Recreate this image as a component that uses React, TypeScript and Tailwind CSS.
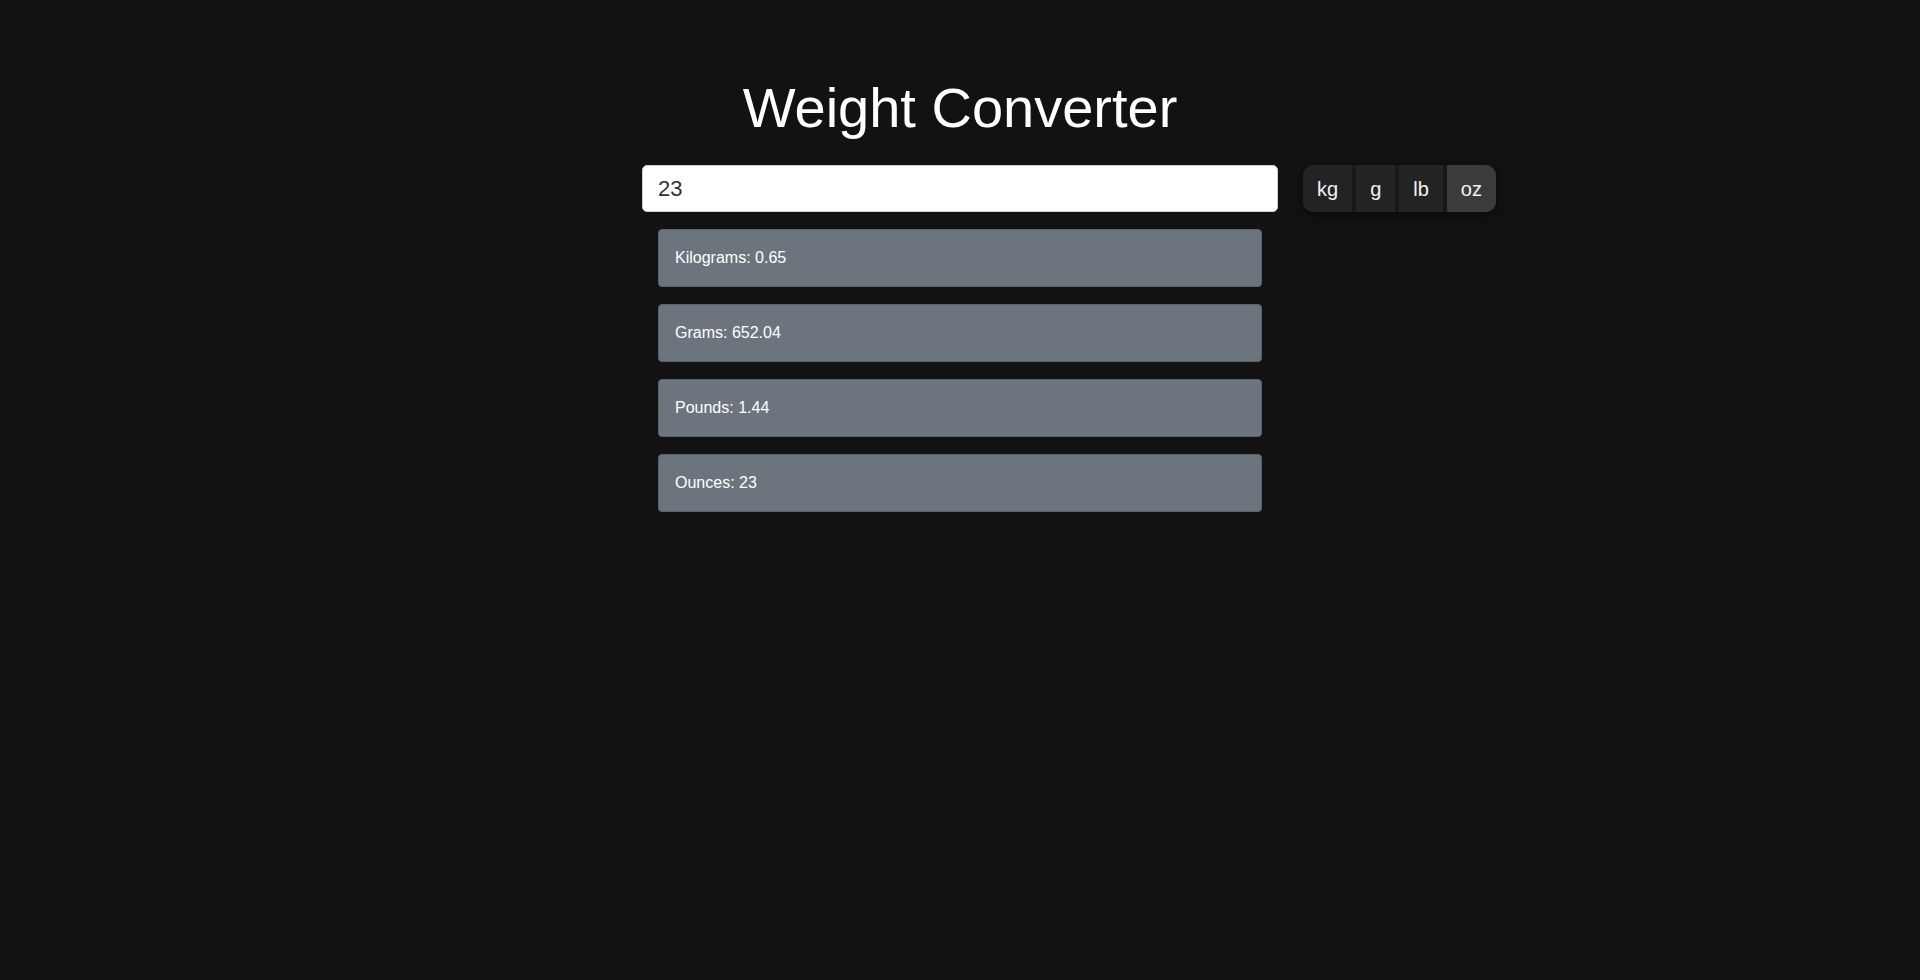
import { useState } from "react";

type Unit = "kg" | "g" | "lb" | "oz";

const toKg: Record<Unit, number> = {
  kg: 1,
  g: 0.001,
  lb: 0.45359237,
  oz: 0.028349523125,
};

const units: Unit[] = ["kg", "g", "lb", "oz"];

const fmt = (n: number) => {
  const r = Math.round(n * 100) / 100;
  return String(r);
};

export default function App() {
  const [value, setValue] = useState("23");
  const [unit, setUnit] = useState<Unit>("oz");

  const num = parseFloat(value) || 0;
  const kg = num * toKg[unit];

  const results = [
    { label: "Kilograms", value: fmt(kg / toKg.kg) },
    { label: "Grams", value: fmt(kg / toKg.g) },
    { label: "Pounds", value: fmt(kg / toKg.lb) },
    { label: "Ounces", value: fmt(kg / toKg.oz) },
  ];

  return (
    <div
      className="min-h-screen bg-[#121212] text-white pt-[76px]"
      style={{ fontFamily: '"Liberation Sans", Arial, sans-serif' }}
    >
      <h1 className="text-center text-[56px] leading-[64px] font-normal text-white mb-[25px]">
        Weight Converter
      </h1>
      <div className="grid grid-cols-[1fr_636px_1fr]">
        <div />
        <div className="flex flex-col">
          <input
            value={value}
            onChange={(e) => setValue(e.target.value)}
            className="h-[47px] w-full bg-white text-[#333] text-[22px] px-[15px] border border-[#ccc] rounded-[5px] outline-none"
          />
          <div className="flex flex-col gap-[17px] mt-[17px] px-[16px]">
            {results.map((r) => (
              <div
                key={r.label}
                className="bg-[#6c757d] border border-[#5c636a] rounded-[4px] p-4 text-[16px] leading-6 text-white"
              >
                {r.label}: {r.value}
              </div>
            ))}
          </div>
        </div>
        <div className="flex items-start">
          <div className="ml-[25px] flex gap-[4px] bg-[#181818] rounded-[10px] overflow-hidden shadow-[0_2px_8px_rgba(0,0,0,0.6)]">
            {units.map((u) => (
              <button
                key={u}
                onClick={() => setUnit(u)}
                className={
                  unit === u
                    ? "h-[47px] px-[14px] text-[20px] text-[#f2f2f2] bg-[#3b3b3b]"
                    : "h-[47px] px-[14px] text-[20px] text-[#f2f2f2] bg-[#232323]"
                }
              >
                {u}
              </button>
            ))}
          </div>
        </div>
      </div>
    </div>
  );
}
